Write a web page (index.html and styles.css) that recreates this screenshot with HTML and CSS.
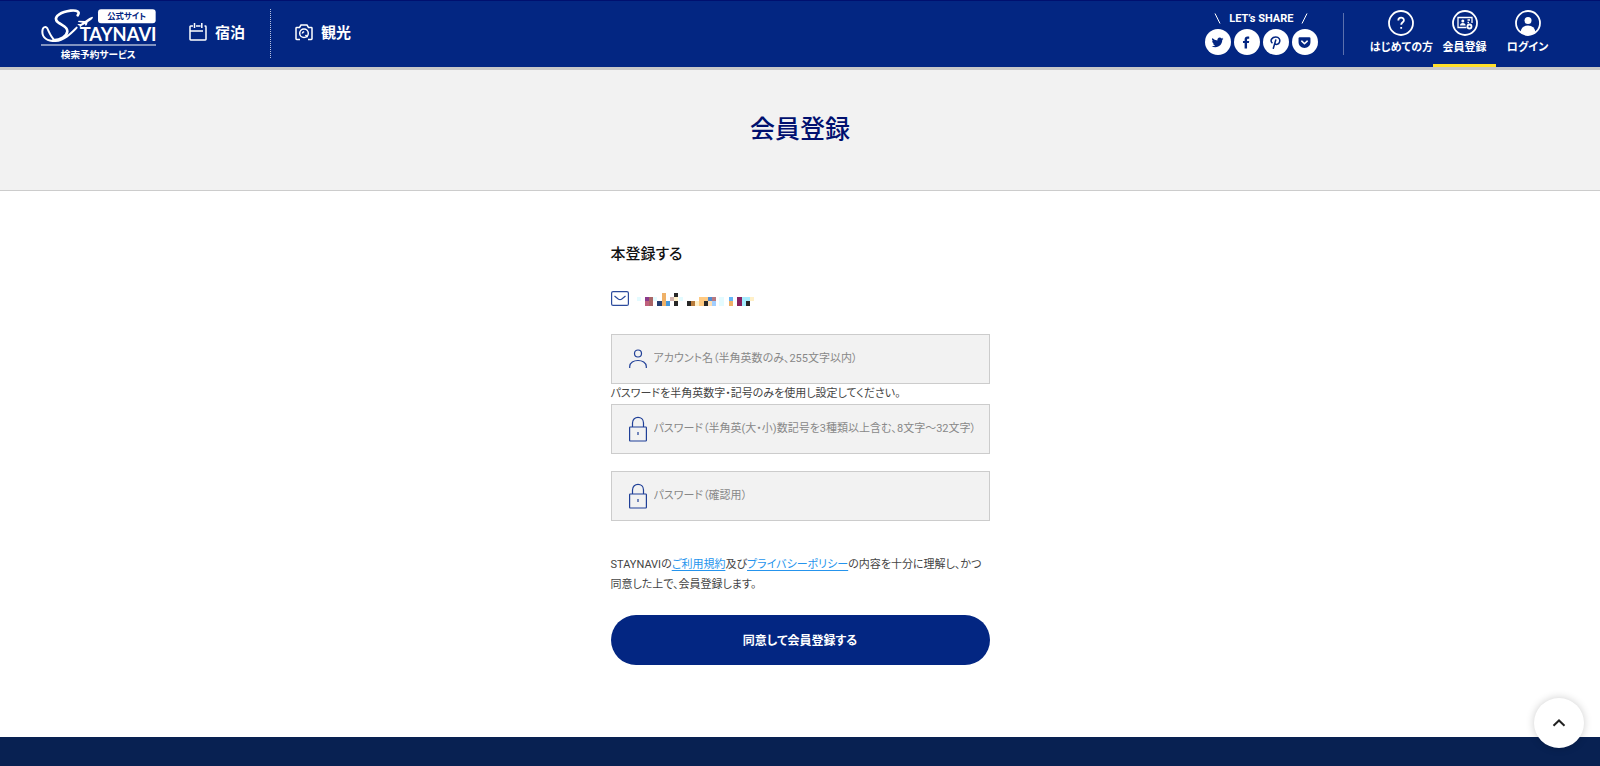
FILE: index.html
```
<!DOCTYPE html>
<html lang="ja">
<head>
<meta charset="utf-8">
<meta name="viewport" content="width=device-width, initial-scale=1">
<title>会員登録 | STAYNAVI</title>
<link rel="stylesheet" href="styles.css">
</head>
<body>
<header class="header">
  <a class="logo" href="#" aria-label="STAYNAVI 検索予約サービス">
    <svg class="logo-art" viewBox="30 20 354 162" aria-hidden="true">
      <g fill="none" stroke="#fff" stroke-linecap="round" stroke-linejoin="round">
        <path stroke-width="8" d="M143 45C152 34 140 29 122 31C94 35 73 47 79 60C85 73 114 76 112 93C110 109 92 119 70 120"/>
        <path stroke-width="6" d="M76 122C52 122 37 112 37 94C37 80 47 76 52 84C57 94 62 110 76 122C104 120 124 98 140 82"/>
      </g>
      <path fill="#fff" d="M187 49C191 50 188 55 183 59L173 66L170 75L166 76L165 71L155 76L152 80L149 79L149 76L142 73L145 71L152 71L158 67L144 65L146 61L165 62L178 53Z"/>
      <rect x="204" y="27" width="173" height="42" rx="9" fill="#fff"/>
      <text class="logo-tag" x="290" y="57" text-anchor="middle">公式サイト</text>
      <text class="logo-name" x="149" y="122">TAYNAVI</text>
      <path stroke="#fff" stroke-width="3" d="M33 134H378"/>
      <text class="logo-sub" x="205" y="172" text-anchor="middle">検索予約サービス</text>
    </svg>
  </a>
  <nav class="main-nav" aria-label="サービス">
    <a class="main-link" href="#">
      <svg class="main-icon" viewBox="0 0 18 18" aria-hidden="true"><path d="M4 3H1.700Q1 3 1 3.700V16.300Q1 17 1.700 17H16.300Q17 17 17 16.300V3.700Q17 3 16.300 3H15.500M7 3H11.500M1 8H14M5.500 0V5M12.800 0V5"/></svg>
      <span>宿泊</span>
    </a>
    <a class="main-link" href="#">
      <svg class="main-icon" viewBox="0 0 18 18" aria-hidden="true"><path d="M5 16.500H1.700Q1 16.500 1 15.800V5.200Q1 4.500 1.700 4.500H4.500L6 2H12L13.500 4.500H16.300Q17 4.500 17 5.200V15.800Q17 16.500 16.300 16.500H13"/><circle cx="9" cy="10.300" r="4.300"/><path d="M7.300 10.500Q7.500 8.900 9.200 8.700M10.500 12L12.500 14.300"/></svg>
      <span>観光</span>
    </a>
  </nav>
  <div class="share">
    <p class="share-title"><svg viewBox="0 0 7 11" aria-hidden="true"><path d="M1 .5L6 10.500"/></svg><span>LET’s SHARE</span><svg viewBox="0 0 7 11" aria-hidden="true"><path d="M6 .5L1 10.500"/></svg></p>
    <ul class="share-list">
      <li><a href="#" aria-label="Twitter"><svg viewBox="0 0 24 24"><path d="M23 5.100a9 9 0 0 1-2.600.7 4.500 4.500 0 0 0 2-2.500 9 9 0 0 1-2.900 1.100 4.500 4.500 0 0 0-7.700 4.100A12.800 12.800 0 0 1 2.500 3.800a4.500 4.500 0 0 0 1.400 6 4.500 4.500 0 0 1-2-.6c0 2.200 1.500 4 3.600 4.500a4.500 4.500 0 0 1-2 .1 4.500 4.500 0 0 0 4.200 3.100A9 9 0 0 1 1 18.800a12.800 12.800 0 0 0 6.900 2c8.300 0 13.100-7 12.800-13.400A9 9 0 0 0 23 5.100Z"/></svg></a></li>
      <li><a href="#" aria-label="Facebook"><svg viewBox="0 0 24 24"><path d="M8.500 23V13H5.500V9.300H8.500V6.700C8.500 3 10.700 1 13.600 1C15 1 17 1.200 17 1.200V5H15C13.500 5 13 5.800 13 7V9.300H17L16.300 13H13V23Z"/></svg></a></li>
      <li><a href="#" aria-label="Pinterest"><svg viewBox="0 0 24 24"><path fill="none" stroke="currentColor" stroke-width="2.800" stroke-linecap="round" d="M5.500 12.500C1.500 8 5.500 2 12.500 2C18.500 2 21 6.500 19.500 11C18 16 12 17 10.800 13.500M12.500 7.500L8 22.500"/></svg></a></li>
      <li><a href="#" aria-label="Pocket"><svg viewBox="0 0 24 24"><path d="M3 2.500H21Q23 2.500 23 4.500V11C23 17.500 18 22 12 22S1 17.500 1 11V4.500Q1 2.500 3 2.500Z"/><path fill="none" stroke="#fff" stroke-width="2.800" stroke-linecap="round" stroke-linejoin="round" d="M7 9.500L12 14.200L17 9.500"/></svg></a></li>
    </ul>
  </div>
  <nav class="user-nav" aria-label="会員メニュー">
    <a class="user-link" href="#">
      <svg class="user-icon" viewBox="0 0 26 26" aria-hidden="true"><circle cx="13" cy="13" r="12"/><path d="M10.300 10.400C10.300 6.800 15.900 6.800 15.900 10.200C15.900 12.300 13.200 12.300 13.200 14.800M13.200 17V18.800"/></svg>
      <span>はじめての方</span>
    </a>
    <a class="user-link is-current" href="#" aria-current="page">
      <svg class="user-icon" viewBox="0 0 26 26" aria-hidden="true"><circle cx="13" cy="13" r="12"/><path stroke-width="1.300" d="M14.500 17.500H6V7.500H20V13M15.500 10H18M15.500 12.500H17"/><path class="solid" d="M8 15.500Q8 13 10.800 13T13.600 15.500Z"/><circle class="solid" cx="10.800" cy="11" r="1.500"/><circle cx="17.500" cy="16.500" r="2"/></svg>
      <span>会員登録</span>
    </a>
    <a class="user-link" href="#">
      <svg class="user-icon" viewBox="0 0 26 26" aria-hidden="true"><circle cx="13" cy="13" r="12"/><circle class="solid" cx="13" cy="10.500" r="3.500"/><path class="solid" d="M5.500 22Q6.500 15.500 13 15.500T20.500 22Q17 25 13 25T5.500 22Z"/></svg>
      <span>ログイン</span>
    </a>
  </nav>
</header>

<div class="page-title"><h1>会員登録</h1></div>

<main class="main">
  <form class="form">
    <h2 class="form-title">本登録する</h2>
    <div class="mail">
      <svg class="mail-icon" viewBox="0 0 18 15" aria-hidden="true"><rect x=".6" y=".6" width="16.800" height="13.800" rx="1.500"/><path d="M3.500 5L7.500 8.200Q9 9 10.500 8.200L14.500 5"/></svg>
      <svg class="mail-mask" viewBox="0 0 118 14" shape-rendering="crispEdges" aria-hidden="true">
        <path fill="#e4fbff" d="M0 5h4v4h-4zM16 5h4v4h-4zM42 5h4v4h-4zM82 5h5v9h-5zM100 9h3v5h-3z"/>
        <path fill="#8b3a8c" d="M8 5h4v4h-4z"/><path fill="#c0607c" d="M8 9h4v5h-4z"/>
        <path fill="#a96566" d="M12 5h4v9h-4z"/><path fill="#243d70" d="M20 9h5v5h-5z"/>
        <path fill="#efb168" d="M25 1h4v13h-4zM92 9h4v5h-4z"/><path fill="#4699dc" d="M29 9h4v5h-4z"/>
        <path fill="#d2b3ae" d="M33 5h4v4h-4z"/><path fill="#282828" d="M37 1h4v4h-4zM37 9h4v5h-4zM50 9h4v5h-4zM67 9h4v5h-4zM109 9h4v5h-4z"/>
        <path fill="#fff0c8" d="M37 5h4v4h-4zM58 9h4v5h-4zM113 5h4v4h-4z"/>
        <path fill="#b87b3b" d="M54 9h4v5h-4z"/><path fill="#ffca82" d="M62 5h5v9h-5zM67 5h4v4h-4z"/>
        <path fill="#528bd1" d="M71 5h4v4h-4z"/><path fill="#b77980" d="M75 5h4v4h-4z"/>
        <path fill="#ffdfb5" d="M71 9h4v5h-4z"/><path fill="#a1ceff" d="M75 9h4v5h-4z"/>
        <path fill="#65b5f6" d="M92 5h4v4h-4z"/><path fill="#882060" d="M100 5h5v9h-5z"/>
        <path fill="#a8edff" d="M105 5h4v9h-4zM109 5h4v4h-4z"/>
      </svg>
    </div>
    <label class="field">
      <svg class="field-icon" viewBox="0 0 18 26" aria-hidden="true"><circle cx="9" cy="7.500" r="3.500"/><path d="M.7 22V20.500C.7 12.500 17.300 12.500 17.300 20.500V22"/></svg>
      <input type="text" aria-label="アカウント名" placeholder="アカウント名（半角英数のみ、255文字以内）">
    </label>
    <p class="hint">パスワードを半角英数字・記号のみを使用し設定してください。</p>
    <label class="field">
      <svg class="field-icon" viewBox="0 0 18 26" aria-hidden="true"><rect x=".6" y="11" width="16.800" height="14" rx=".7"/><path d="M3.500 11V7C3.500-.5 14.500-.5 14.500 7V11M9 16V19"/></svg>
      <input type="password" aria-label="パスワード" placeholder="パスワード（半角英(大・小)数記号を3種類以上含む、8文字～32文字）">
    </label>
    <label class="field field-confirm">
      <svg class="field-icon" viewBox="0 0 18 26" aria-hidden="true"><rect x=".6" y="11" width="16.800" height="14" rx=".7"/><path d="M3.500 11V7C3.500-.5 14.500-.5 14.500 7V11M9 16V19"/></svg>
      <input type="password" aria-label="パスワード（確認用）" placeholder="パスワード（確認用）">
    </label>
    <p class="terms">STAYNAVIの<a href="#">ご利用規約</a>及び<a href="#">プライバシーポリシー</a>の内容を十分に理解し、かつ同意した上で、会員登録します。</p>
    <button class="submit" type="submit">同意して会員登録する</button>
  </form>
</main>
<footer class="footer"></footer>
<button class="to-top" type="button" aria-label="ページの先頭へ"><svg viewBox="0 0 14 8" aria-hidden="true"><path d="M1.500 6.800L7 1.500L12.500 6.800"/></svg></button>
</body>
</html>
```
FILE: styles.css
```
* {
  box-sizing: border-box;
}

body {
  display: flex;
  flex-direction: column;
  min-height: 100vh;
  margin: 0;
  background: #fff;
  color: #444;
  font-family: Roboto, "Noto Sans CJK JP", sans-serif;
  font-size: 11px;
  font-feature-settings: "palt";
}

h1, h2, p, ul {
  margin: 0;
  padding: 0;
}

a {
  color: inherit;
  text-decoration: none;
}

/* Header */
.header {
  display: flex;
  align-items: stretch;
  height: 67px;
  padding: 0 41px 0 40px;
  border-top: 1px solid #00106f;
  background: #032682;
  box-shadow: 0 3px 0 #c8c8c8;
  color: #fff;
  position: relative;
}

.logo {
  padding-top: 6px;
}

.logo-art {
  display: block;
  width: 118px;
  height: 54px;
}

.logo-tag {
  fill: #032682;
  font-size: 25px;
  font-weight: 700;
}

.logo-name {
  fill: #fff;
  font-family: Lato, sans-serif;
  font-size: 55px;
  font-weight: 700;
}

.logo-sub {
  fill: #fff;
  font-size: 29px;
  font-weight: 700;
}

.main-nav {
  display: flex;
  align-items: center;
  margin: 8px auto 9px 6px;
}

.main-link {
  display: flex;
  align-items: center;
  gap: 8px;
  height: 100%;
  padding: 0 25px 4px;
  font-size: 15px;
  font-weight: 700;
}

.main-link + .main-link {
  padding-left: 24px;
  border-left: 1px dotted #b8c2dd;
}

.main-icon {
  width: 18px;
  height: 18px;
  fill: none;
  stroke: #fff;
  stroke-width: 1.5;
}

.share {
  margin: 12px 0;
  padding-right: 25px;
  border-right: 1px solid #5b70ad;
}

.share-title {
  display: flex;
  align-items: center;
  justify-content: center;
  gap: 8px;
  height: 10px;
  margin-bottom: 6px;
  font-size: 11px;
  font-weight: 700;
}

.share-title svg {
  width: 7px;
  height: 11px;
  fill: none;
  stroke: #fff;
}

.share-list {
  display: flex;
  gap: 3px;
  list-style: none;
}

.share-list a {
  display: flex;
  align-items: center;
  justify-content: center;
  width: 26px;
  height: 26px;
  border-radius: 50%;
  background: #fff;
  color: #032682;
}

.share-list svg {
  width: 13px;
  height: 13px;
  fill: currentColor;
}

.user-nav {
  display: flex;
  margin-left: 26px;
}

.user-link {
  display: flex;
  flex-direction: column;
  align-items: center;
  gap: 4px;
  min-width: 63px;
  padding-top: 9px;
  border-bottom: 3px solid transparent;
  font-size: 11px;
  font-weight: 700;
  line-height: 16px;
  white-space: nowrap;
}

.user-link.is-current {
  border-bottom-color: #ffdf2b;
}

.user-icon {
  width: 26px;
  height: 26px;
  fill: none;
  stroke: #fff;
  stroke-width: 1.8;
}

.user-icon .solid {
  fill: #fff;
  stroke: none;
}

/* Page title */
.page-title {
  padding: 42px 20px;
  margin-top: 3px;
  border-bottom: 1px solid #ccc;
  background: #f2f2f2;
  color: #00106f;
  text-align: center;
}

.page-title h1 {
  font-size: 25px;
  font-weight: 500;
  line-height: 36px;
}

/* Registration form */
.main {
  display: flex;
  justify-content: center;
  padding: 52px 16px 72px;
}

.form {
  width: 100%;
  max-width: 379px;
}

.form-title {
  margin-bottom: 26px;
  color: #111;
  font-size: 15px;
  font-weight: 500;
  line-height: 22px;
}

.mail {
  display: flex;
  align-items: center;
  gap: 8px;
  margin-bottom: 28px;
}

.mail-icon {
  width: 18px;
  height: 15px;
  fill: none;
  stroke: #2c4b9d;
  stroke-width: 1.2;
}

.mail-mask {
  width: 118px;
  height: 14px;
}

.field {
  display: flex;
  align-items: center;
  gap: 7px;
  height: 50px;
  padding: 0 10px 0 17px;
  border: 1px solid #ccc;
  background: #f2f2f2;
}

.field-icon {
  flex: none;
  width: 18px;
  height: 26px;
  fill: none;
  stroke: #1f3f97;
  stroke-width: 1.2;
}

.field input {
  flex: 1;
  min-width: 0;
  height: 48px;
  padding: 0 0 2px;
  border: 0;
  outline: 0;
  background: transparent;
  color: #333;
  font: inherit;
  font-feature-settings: inherit;
}

.field input::placeholder {
  color: #888;
}

.hint {
  line-height: 20px;
}

.field-confirm {
  margin-top: 17px;
}

.terms {
  margin: 34px 0 20px;
  line-height: 20px;
}

.terms a {
  color: #2594ed;
  text-decoration: underline;
  text-underline-offset: 2px;
}

.submit {
  display: block;
  width: 100%;
  height: 50px;
  padding: 0 0 2px;
  border: 0;
  border-radius: 25px;
  background: #032682;
  color: #fff;
  font: inherit;
  font-size: 12px;
  font-weight: 700;
  font-feature-settings: inherit;
}

/* Footer */
.footer {
  flex: 1;
  min-height: 29px;
  background: #082152;
}

.to-top {
  position: fixed;
  right: 16px;
  bottom: 18px;
  display: flex;
  align-items: center;
  justify-content: center;
  width: 50px;
  height: 50px;
  padding: 0;
  border: 0;
  border-radius: 50%;
  background: #fff;
  box-shadow: 0 0 8px rgba(0, 0, 0, 0.2);
}

.to-top svg {
  width: 14px;
  height: 8px;
  fill: none;
  stroke: #222;
  stroke-width: 2;
}
```
